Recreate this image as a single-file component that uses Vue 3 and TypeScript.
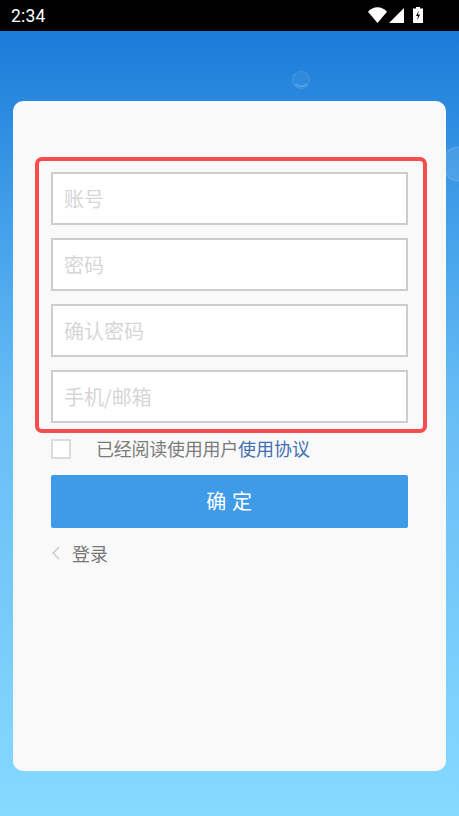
<script setup lang="ts">
const fields: string[] = ['账号', '密码', '确认密码', '手机/邮箱']
</script>

<template>
  <div class="page">
    <header class="status">
      <span class="time">2:34</span>
      <div class="status-icons">
        <svg width="19" height="16" viewBox="0 0 19 16"><path d="M0 4.800C2.500 2 5.800.3 9.500.3S16.500 2 19 4.800L9.500 16z" fill="#fff" /></svg>
        <svg width="15" height="15" viewBox="0 0 15 15"><path d="M15 0v15H0z" fill="#fff" /></svg>
        <svg class="battery" width="10" height="16" viewBox="0 0 10 16"><path d="M3 0h4v1.500h3V16H0V1.500h3z" fill="#fff" /><path d="M5.800 3.500 3 9h2l-.8 4.500L7 7.500H5z" fill="#000" /></svg>
      </div>
    </header>

    <main class="stage">
      <svg class="bubble bubble-a" width="20" height="20" viewBox="0 0 20 20">
        <circle cx="10" cy="10" r="8.500" fill="#fff" fill-opacity=".05" stroke="#fff" stroke-opacity=".12" stroke-width="1.200" />
        <path d="M4.500 14a7.500 7.500 0 0 0 11 0" fill="none" stroke="#fff" stroke-opacity=".22" stroke-width="1.500" />
      </svg>
      <svg class="bubble bubble-b" width="36" height="36" viewBox="0 0 36 36">
        <circle cx="18" cy="18" r="17" fill="#fff" fill-opacity=".1" stroke="#fff" stroke-opacity=".12" stroke-width="1.500" />
      </svg>

      <section class="card">
        <div class="highlight">
          <input v-for="field in fields" :key="field" class="field" type="text" :placeholder="field" />
        </div>

        <label class="agree">
          <input class="check" type="checkbox" />
          <span class="agree-text">已经阅读使用用户<a class="link">使用协议</a></span>
        </label>

        <button class="submit" type="button">确 定</button>

        <div class="back">
          <svg width="10" height="14" viewBox="0 0 10 14"><path d="M8 1 2 7l6 6" fill="none" stroke="#c4c4c4" stroke-width="1.200" /></svg>
          <span>登录</span>
        </div>
      </section>
    </main>
  </div>
</template>

<style>
html, body { margin: 0; padding: 0; }
</style>

<style scoped>
* { box-sizing: border-box; }
.page {
  width: 459px;
  height: 816px;
  display: flex;
  flex-direction: column;
  overflow: hidden;
  font-family: "Noto Sans CJK SC", "Noto Sans", sans-serif;
}
.status {
  height: 31px;
  flex: none;
  background: #000;
  color: #fff;
  display: flex;
  align-items: center;
  justify-content: space-between;
  padding: 0 36px 1px 11px;
}
.time {
  font: 17.500px Roboto, sans-serif;
  letter-spacing: .2px;
  margin-top: 2px;
}
.status-icons { display: flex; align-items: center; gap: 2px; }
.status-icons svg { display: block; flex: none; }
.battery { margin-left: 7px; }
.stage {
  position: relative;
  flex: 1;
  padding: 70px 13px 45px;
  background: linear-gradient(180deg, #1a7bd8 0%, #3f9de8 22%, #67bdf5 48%, #86d9ff 100%);
}
.bubble { position: absolute; }
.bubble-a { left: 291px; top: 39px; }
.bubble-b { left: 441px; top: 115px; }
.card {
  position: relative;
  height: 670px;
  background: #f9f9f9;
  border-radius: 10px;
  padding: 56px 0 0 22px;
}
.highlight {
  width: 392px;
  height: 276px;
  border: 4px solid #f94c4c;
  border-radius: 7px;
  padding: 11px 15px 0 12px;
  display: flex;
  flex-direction: column;
  gap: 13px;
}
.field {
  width: 100%;
  height: 53px;
  flex: none;
  background: #fff;
  border: 2px solid #cdcdcd;
  border-radius: 0;
  padding: 0 11px;
  font: 20px "Noto Sans CJK SC", sans-serif;
  outline: none;
}
.field::placeholder { color: #d6d6d6; opacity: 1; }
.agree {
  display: flex;
  align-items: center;
  height: 32px;
  margin: 0 0 10px 16px;
}
.check {
  appearance: none;
  width: 20px;
  height: 20px;
  margin: 0 25px 0 0;
  background: #fff;
  border: 2px solid #dcdcdc;
}
.agree-text {
  font-size: 18px;
  line-height: 28px;
  margin-top: -3px;
  color: #7c7c7c;
  letter-spacing: -.25px;
}
.link { color: #3f6fb0; letter-spacing: 0; }
.submit {
  display: block;
  width: 357px;
  height: 53px;
  margin-left: 16px;
  padding: 0 0 2px;
  border: 0;
  border-radius: 2px;
  background: #3f9be8;
  color: #fff;
  font: 20px "Noto Sans CJK SC", sans-serif;
  letter-spacing: .6px;
}
.back {
  display: flex;
  align-items: center;
  gap: 11px;
  margin: 12px 0 0 16px;
  height: 26px;
  font-size: 18px;
  color: #777;
}
.back svg { display: block; }
</style>
